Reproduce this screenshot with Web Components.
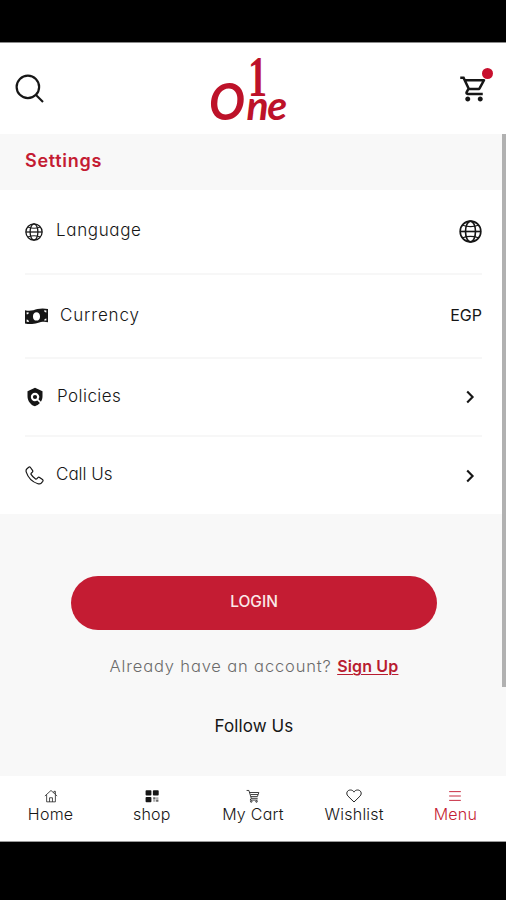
<!DOCTYPE html>
<html lang="en">
<head>
<meta charset="utf-8">
<title>One</title>
<style>
    html, body {
        margin: 0;
        height: 100%;
        overflow: hidden;
        background: #000;
    }
</style>
</head>
<body>
<one-app>
    <app-header slot="header"></app-header>
    <section-title>Settings</section-title>
    <settings-list>
        <settings-row style="--height: 85px; --gap: 13px; --ls: .65px">
            <app-icon slot="icon" name="globe" size="18"></app-icon>
            Language
            <app-icon slot="end" name="globe" size="23"></app-icon>
        </settings-row>
        <settings-row style="--height: 84px; --gap: 12px; --ls: .85px">
            <app-icon slot="icon" name="cash" size="23"></app-icon>
            Currency
            <span slot="end">EGP</span>
        </settings-row>
        <settings-row style="--height: 78px; --gap: 12px; --ls: .45px">
            <app-icon slot="icon" name="policy" size="20"></app-icon>
            Policies
            <app-icon slot="end" name="chevron" size="24"></app-icon>
        </settings-row>
        <settings-row last style="--height: 77px; --gap: 12px; --ls: 0px">
            <app-icon slot="icon" name="phone" size="19"></app-icon>
            Call Us
            <app-icon slot="end" name="chevron" size="24"></app-icon>
        </settings-row>
    </settings-list>
    <account-panel></account-panel>
    <nav-bar slot="footer">
        <nav-item icon="home">Home</nav-item>
        <nav-item icon="grid">shop</nav-item>
        <nav-item icon="trolley">My Cart</nav-item>
        <nav-item icon="heart">Wishlist</nav-item>
        <nav-item icon="menu" active>Menu</nav-item>
    </nav-bar>
</one-app>

<script>
// All icons use a 24x24 box
const icons = {
    search: `<g fill="none" stroke="currentColor" stroke-width="1.75"><circle cx="10.3" cy="10.3" r="9"/><path d="M16.8 16.8 22.4 22.4"/></g>`,
    cart: `<path fill="currentColor" d="M15.55 13c.75 0 1.41-.41 1.75-1.03l3.58-6.49A.996.996 0 0 0 20.01 4H5.21l-.94-2H1v2h2l3.6 7.59-1.35 2.44C4.52 15.37 5.48 17 7 17h12v-2H7l1.1-2h7.45zM6.16 6h12.15l-2.76 5H8.53L6.16 6zM7 18c-1.1 0-1.99.9-1.99 2S5.9 22 7 22s2-.9 2-2-.9-2-2-2zm10 0c-1.1 0-1.99.9-1.99 2s.89 2 1.99 2 2-.9 2-2-.9-2-2-2z"/>`,
    globe: `<g fill="none" stroke="currentColor" stroke-width="1.7"><circle cx="12" cy="12" r="10.8"/><ellipse cx="12" cy="12" rx="5.200" ry="10.8"/><path d="M1 12h22"/><path stroke-width="1.300" d="M4 5.500c4.500 2 11.500 2 16 0M4 18.500c4.500-2 11.500-2 16 0"/></g>`,
    cash: `<path fill="currentColor" fill-rule="evenodd" d="M0 5.500C5 7 9 5.500 13 4.300S21 3.500 24 4.300V18c-4-1.200-7-.4-11 .7S5 20.500 0 19.200zM12 7.500c-2.300 0-3.700 2-3.700 4.400s1.400 4.400 3.700 4.400 3.700-2 3.700-4.400-1.400-4.400-3.700-4.400zM1.700 7.500v2.200c1.400 0 2.200-.7 2.300-2zM1.700 15v2.500l2.400.2c0-1.500-.9-2.500-2.400-2.700zM22.300 5.700l-2.300-.2c0 1.500.8 2.300 2.300 2.400zM22.300 14c-1.300 0-2.200.8-2.300 2.100l2.300.200z"/>`,
    policy: `<path fill="currentColor" d="m21 5-9-4-9 4v6c0 5.550 3.840 10.740 9 12 2.300-.56 4.330-1.900 5.880-3.710l-3.120-3.120a4.994 4.994 0 0 1-6.290-.64 5.003 5.003 0 0 1 0-7.070 5.003 5.003 0 0 1 7.070 0 5.006 5.006 0 0 1 .64 6.290l2.900 2.900C20.290 15.690 21 13.380 21 11V5z"/><circle cx="12" cy="12" r="2.500" fill="currentColor"/>`,
    phone: `<path fill="none" stroke="currentColor" stroke-width="1.500" stroke-linejoin="round" d="M2.500 3.400 4.700 1.600c.8-.6 1.600-.5 2.200.3l2.600 3.700c.5.800.4 1.500-.2 2.100L7.800 9.200c-.4.500-.4.900-.1 1.400 1.400 2.300 3.300 4.300 5.700 5.800.5.300 1 .2 1.400-.2l1.500-1.500c.6-.6 1.400-.7 2.100-.2l3.700 2.600c.8.600.9 1.400.300 2.200l-1.800 2.200c-1 1.200-2.600 1.400-4.300.9C9 20 4 15 1.600 7.700 1.100 6 1.300 4.400 2.500 3.400z"/>`,
    chevron: `<path fill="none" stroke="currentColor" stroke-width="2.100" d="m9.200 6.400 5.400 5.600-5.400 5.600"/>`,
    home: `<g fill="none" stroke="currentColor" stroke-width="1.300" stroke-linejoin="round"><path d="M1.500 12 12 2.500 22.500 12M4.500 10v12h15V10M9.500 22v-7h5v7M17 6.500V4h2.500v5"/></g>`,
    grid: `<g fill="currentColor"><rect x="1" y="2" width="10" height="9" rx="1.500"/><rect x="13.500" y="2" width="10" height="9" rx="1.500"/><rect x="1" y="13.500" width="10" height="9" rx="1.500"/><path d="M14 14h4v4h-4zM19 18h4v4h-4z" opacity=".65"/><path d="M19 14h4v3h-4zM14 19h4v3h-4z" opacity=".35"/></g>`,
    trolley: `<g fill="none" stroke="currentColor" stroke-width="1.400"><path d="M1 2.500h4l4 13.500h11M6 6h16l-2.500 7H8.500M8 9.500h12.500M9 16l-2 3h13"/><circle cx="9" cy="21.500" r="1.300"/><circle cx="18" cy="21.500" r="1.300"/></g>`,
    heart: `<path fill="none" stroke="currentColor" stroke-width="1.400" d="M12 21 3 12.200C-.8 8 2 3 6.500 3 9.300 3 11 4.300 12 6.200 13 4.300 14.700 3 17.500 3 22 3 24.800 8 21 12.200z"/>`,
    menu: `<path fill="none" stroke="currentColor" stroke-width="1.600" d="M2 4.500h20M2 12h20M2 19.500h20"/>`,
};

// Attaches an open shadow root holding the given markup
function render(el, html) {
    const template = document.createElement('template');
    template.innerHTML = html;
    el.attachShadow({ mode: 'open' }).appendChild(template.content.cloneNode(true));
}

class AppIcon extends HTMLElement {
    connectedCallback() {
        if (this.shadowRoot) return;
        const size = this.getAttribute('size') || 24;
        render(this, `
            <style>
                :host { display: block; flex: none; }
                svg { display: block; }
            </style>
            <svg width="${size}" height="${size}" viewBox="0 0 24 24">${icons[this.getAttribute('name')]}</svg>
        `);
    }
}

class OneApp extends HTMLElement {
    constructor() {
        super();
        render(this, `
            <style>
                :host {
                    display: flex;
                    flex-direction: column;
                    box-sizing: border-box;
                    width: 506px;
                    height: 900px;
                    padding: 42px 0 58px;
                    background: #000;
                    color: #161616;
                    font-family: Inter, "Open Sans", sans-serif;
                    font-feature-settings: "cv11", "ss03";
                    --red: #c41c33;
                }
                .body {
                    flex: 1;
                    display: flex;
                    flex-direction: column;
                    position: relative;
                    background: #f8f8f8;
                }
                .scrollbar {
                    position: absolute;
                    top: 0;
                    right: 0;
                    width: 4px;
                    height: 553px;
                    background: #b1b1b1;
                }
            </style>
            <slot name="header"></slot>
            <div class="body">
                <slot></slot>
                <div class="scrollbar"></div>
            </div>
            <slot name="footer"></slot>
        `);
    }
}

class AppHeader extends HTMLElement {
    constructor() {
        super();
        render(this, `
            <style>
                :host {
                    display: flex;
                    align-items: center;
                    justify-content: space-between;
                    box-sizing: border-box;
                    height: 92px;
                    padding: 0 17px 0 15px;
                    border-top: 1px solid #8a8a8a;
                    background: #fff;
                }
                .logo { display: block; margin-right: 4px; overflow: visible; }
                .logo text { fill: #bd1229; }
                .cart { position: relative; }
                .badge {
                    position: absolute;
                    top: -6px;
                    right: -4px;
                    width: 11px;
                    height: 11px;
                    border-radius: 50%;
                    background: #c8102e;
                }
            </style>
            <app-icon name="search" size="30"></app-icon>
            <svg class="logo" width="84" height="76" viewBox="207 52 84 76">
                <text transform="translate(247 96.500) scale(.68 1)" font-family="Liberation Serif" font-weight="700" font-size="56">1</text>
                <text transform="translate(208 120.500) scale(.92 1)" font-family="Lato" font-style="italic" font-weight="700" font-size="52">O</text>
                <text transform="translate(245.500 120.500)" font-family="Lato" font-style="italic" font-weight="700" font-size="41" letter-spacing="-1.500">ne</text>
            </svg>
            <div class="cart">
                <app-icon name="cart" size="30"></app-icon>
                <div class="badge"></div>
            </div>
        `);
    }
}

class SectionTitle extends HTMLElement {
    constructor() {
        super();
        render(this, `
            <style>
                :host {
                    display: flex;
                    align-items: center;
                    box-sizing: border-box;
                    height: 56px;
                    padding: 0 25px 4px;
                    color: var(--red);
                    font-size: 18px;
                    font-weight: 600;
                    letter-spacing: .7px;
                }
            </style>
            <slot></slot>
        `);
    }
}

class SettingsList extends HTMLElement {
    constructor() {
        super();
        render(this, `
            <style>
                :host {
                    display: block;
                    padding: 0 24px 0 25px;
                    background: #fff;
                }
            </style>
            <slot></slot>
        `);
    }
}

class SettingsRow extends HTMLElement {
    constructor() {
        super();
        render(this, `
            <style>
                :host {
                    display: flex;
                    align-items: center;
                    gap: var(--gap);
                    box-sizing: border-box;
                    height: var(--height);
                    border-bottom: 2px solid #f7f7f7;
                    font-size: 17px;
                    font-weight: 300;
                }
                :host([last]) { border-bottom: 0; }
                .label {
                    flex: 1;
                    padding-bottom: 3px;
                    letter-spacing: var(--ls);
                }
                ::slotted(span) {
                    padding-bottom: 2px;
                    font-size: 16px;
                    font-weight: 400;
                }
            </style>
            <slot name="icon"></slot>
            <div class="label"><slot></slot></div>
            <slot name="end"></slot>
        `);
    }
}

class AccountPanel extends HTMLElement {
    constructor() {
        super();
        render(this, `
            <style>
                :host {
                    display: flex;
                    flex-direction: column;
                    align-items: center;
                    padding: 61.5px 0 0 2px;
                }
                button {
                    width: 366px;
                    height: 54px;
                    border: 0;
                    border-radius: 27px;
                    padding: 0 0 2px;
                    background: var(--red);
                    color: #fbe9e9;
                    font: inherit;
                    font-size: 15.5px;
                    font-weight: 500;
                    letter-spacing: 0;
                }
                p {
                    margin: 24.500px 0 0;
                    color: #6b6b6b;
                    font-size: 16.5px;
                    font-weight: 300;
                    line-height: 24px;
                    letter-spacing: .85px;
                }
                a {
                    color: #b81c30;
                    font-size: 16px;
                    font-weight: 600;
                    letter-spacing: .15px;
                    text-decoration: underline;
                    text-decoration-thickness: 1px;
                    text-underline-offset: 2px;
                }
                h2 {
                    margin: 36px 0 0;
                    font-size: 17px;
                    font-weight: 400;
                    line-height: 24px;
                    letter-spacing: .1px;
                }
            </style>
            <button>LOGIN</button>
            <p>Already have an account? <a>Sign Up</a></p>
            <h2>Follow Us</h2>
        `);
    }
}

class NavBar extends HTMLElement {
    constructor() {
        super();
        render(this, `
            <style>
                :host {
                    display: grid;
                    grid-template-columns: repeat(5, 1fr);
                    box-sizing: border-box;
                    height: 66px;
                    border-bottom: 1px solid #9a9a9a;
                    background: #fff;
                }
            </style>
            <slot></slot>
        `);
    }
}

class NavItem extends HTMLElement {
    connectedCallback() {
        if (this.shadowRoot) return;
        render(this, `
            <style>
                :host {
                    display: flex;
                    flex-direction: column;
                    align-items: center;
                    padding-top: 13px;
                    font-size: 16px;
                    font-weight: 300;
                    line-height: 20px;
                    letter-spacing: .25px;
                    white-space: nowrap;
                }
                :host([active]) { color: var(--red); }
                .icon {
                    display: flex;
                    align-items: center;
                    height: 14px;
                    margin-bottom: 1px;
                }
            </style>
            <div class="icon">
                <app-icon name="${this.getAttribute('icon')}" size="${this.getAttribute('icon') === 'heart' ? 16 : 14}"></app-icon>
            </div>
            <span><slot></slot></span>
        `);
    }
}

customElements.define('app-icon', AppIcon);
customElements.define('one-app', OneApp);
customElements.define('app-header', AppHeader);
customElements.define('section-title', SectionTitle);
customElements.define('settings-list', SettingsList);
customElements.define('settings-row', SettingsRow);
customElements.define('account-panel', AccountPanel);
customElements.define('nav-bar', NavBar);
customElements.define('nav-item', NavItem);
</script>
</body>
</html>
